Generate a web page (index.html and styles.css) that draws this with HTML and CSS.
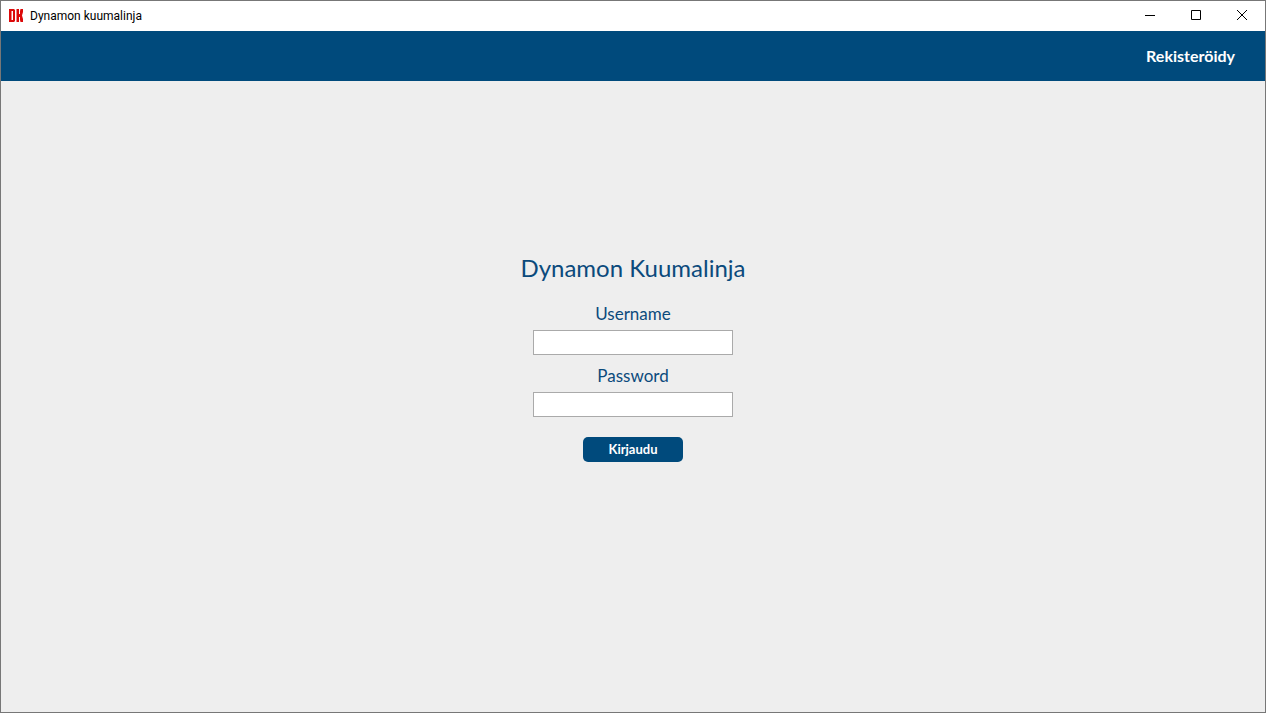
FILE: index.html
```html
<!DOCTYPE html>
<html lang="fi">
<head>
<meta charset="utf-8">
<title>Dynamon kuumalinja</title>
<link rel="stylesheet" href="styles.css">
</head>
<body>
<div class="window">
  <header class="titlebar">
    <svg class="logo" width="16" height="16" viewBox="0 0 16 16" aria-hidden="true"><path fill="#dc0a0a" fill-rule="evenodd" d="M1 1h5l1 1v11l-1 1H1zM3.500 3v9H5V3zM8.500 1H11v5h1V3l.5-2H15v3l-1 3.500 1 3.500v3h-2.500l-.5-2V9h-1v5H8.500z"/></svg>
    <span class="caption">Dynamon kuumalinja</span>
    <div class="controls">
      <button class="control" aria-label="Minimize"><svg width="10" height="10" viewBox="0 0 10 10"><path d="M0 5.500h10"/></svg></button>
      <button class="control" aria-label="Maximize"><svg width="10" height="10" viewBox="0 0 10 10"><path d="M.5.500h9v9h-9z"/></svg></button>
      <button class="control" aria-label="Close"><svg width="10" height="10" viewBox="0 0 10 10"><path d="M0 0l10 10M10 0L0 10"/></svg></button>
    </div>
  </header>
  <nav class="navbar"><a class="register" href="#register">Rekisteröidy</a></nav>
  <main class="content">
    <form class="login">
      <h1 class="heading">Dynamon Kuumalinja</h1>
      <label class="label" for="username">Username</label>
      <input class="field" id="username" type="text">
      <label class="label" for="password">Password</label>
      <input class="field" id="password" type="password">
      <button class="submit" type="submit">Kirjaudu</button>
    </form>
  </main>
</div>
</body>
</html>
```
FILE: styles.css
```css
* { box-sizing: border-box; }
body { margin: 0; font-family: Roboto, sans-serif; }
.window { display: flex; flex-direction: column; min-height: 100vh; border: 1px solid #777; background: #eee; }
.titlebar { display: flex; align-items: center; height: 30px; padding-left: 7px; background: #fff; }
.caption { margin-left: 6px; font-size: 12px; color: #000; }
.controls { display: flex; align-self: stretch; margin-left: auto; }
.control { display: flex; align-items: center; justify-content: center; width: 46px; padding: 0 0 2px; border: 0; background: none; }
.control svg { fill: none; stroke: #000; overflow: visible; }
.navbar { display: flex; align-items: center; justify-content: flex-end; height: 50px; padding: 0 30px 2px; background: #004a7c; }
.register { font-family: Lato, sans-serif; font-size: 16px; font-weight: 700; color: #fff; text-decoration: none; }
.content { display: flex; flex: 1; align-items: center; justify-content: center; padding-bottom: 79px; }
.login { display: flex; flex-direction: column; align-items: center; font-family: Lato, sans-serif; color: #0b4a7c; }
.heading { margin: 0 0 20px; font-size: 24px; line-height: 32px; font-weight: 400; }
.label { margin-bottom: 6px; font-size: 17px; line-height: 20px; }
.field { width: 200px; height: 25px; margin: 0 0 11px; padding: 0 6px; border: 1px solid #aaa; background: #fff; font: inherit; }
.submit { width: 100px; height: 25px; margin-top: 9px; padding: 0 0 2px; border: 0; border-radius: 5px; background: #004a7c; color: #fff; font-family: Lato, sans-serif; font-size: 13px; font-weight: 700; }
```
